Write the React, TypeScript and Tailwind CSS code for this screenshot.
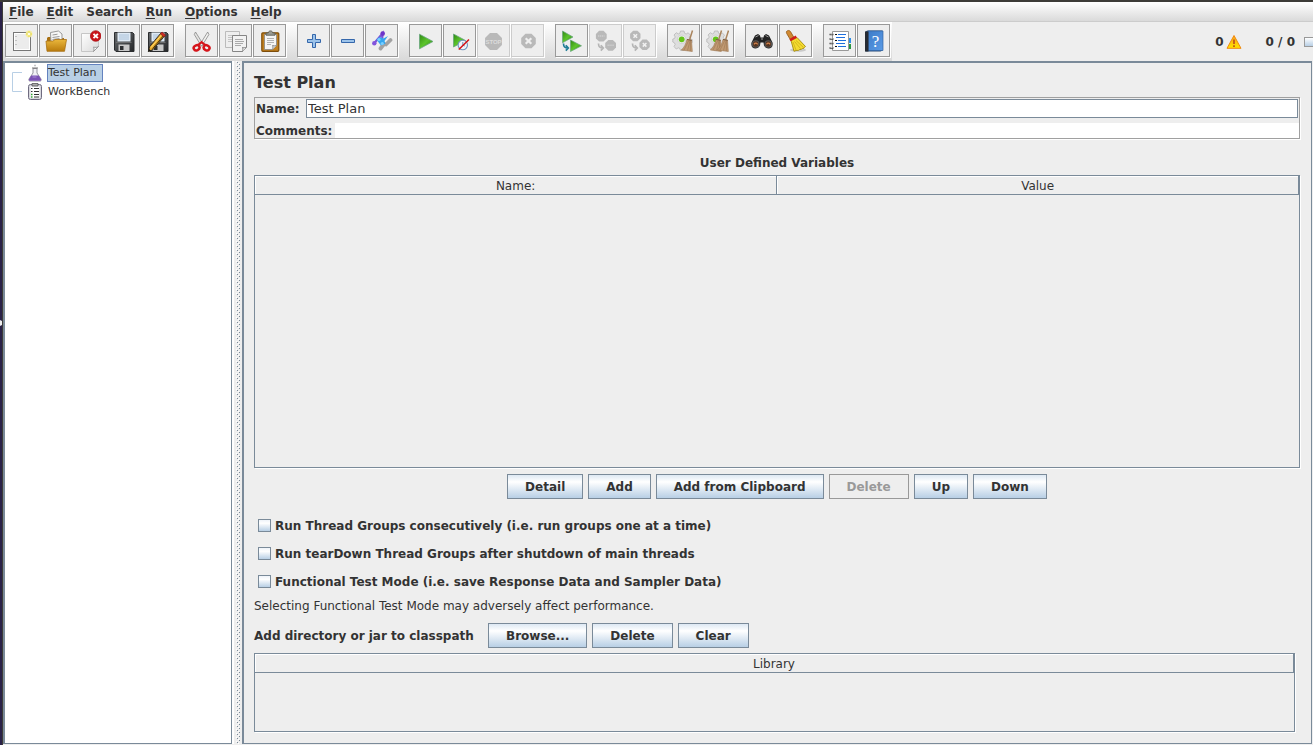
import React, { useState } from "react";

type IconProps = { children: React.ReactNode };

function Icon({ children }: IconProps) {
  return (
    <svg viewBox="0 0 23 23" className="h-[23px] w-[23px]" fill="none" aria-hidden="true">
      {children}
    </svg>
  );
}

function Defs() {
  return (
    <svg className="absolute h-0 w-0" aria-hidden="true">
      <defs>
        <linearGradient id="paper" x1="0" y1="0" x2="1" y2="1">
          <stop offset="0" stopColor="#ffffff" />
          <stop offset="1" stopColor="#d9d9d9" />
        </linearGradient>
        <linearGradient id="folder" x1="0" y1="0" x2="0" y2="1">
          <stop offset="0" stopColor="#eab73c" />
          <stop offset="1" stopColor="#b97b0c" />
        </linearGradient>
        <linearGradient id="green" x1="0" y1="0" x2="1" y2="1">
          <stop offset="0" stopColor="#2f8a12" />
          <stop offset="0.5" stopColor="#5cc42c" />
          <stop offset="1" stopColor="#2a8510" />
        </linearGradient>
        <linearGradient id="steel" x1="0" y1="0" x2="1" y2="1">
          <stop offset="0" stopColor="#6a6d70" />
          <stop offset="1" stopColor="#26282a" />
        </linearGradient>
        <linearGradient id="book" x1="0" y1="0" x2="1" y2="1">
          <stop offset="0" stopColor="#3d7cc9" />
          <stop offset="1" stopColor="#5b9be6" />
        </linearGradient>
        <linearGradient id="warn" x1="0" y1="0" x2="0" y2="1">
          <stop offset="0" stopColor="#f9a11b" />
          <stop offset="1" stopColor="#ffe600" />
        </linearGradient>
      </defs>
    </svg>
  );
}

const NewIcon = () => (
  <Icon>
    <rect x="3.5" y="3.5" width="17" height="18" fill="#ececec" stroke="#777" />
    <rect x="4.5" y="4.5" width="15" height="16" stroke="#fff" />
    <path d="M6 7v1M6 11v1M6 15v1" stroke="#999" />
    <circle cx="19" cy="5" r="3.4" fill="#f5ec9a" fillOpacity=".9" />
    <path d="M19 2v6M16 5h6" stroke="#eadb3a" />
    <circle cx="19" cy="5" r="1.3" fill="#fffde0" />
  </Icon>
);

const OpenIcon = () => (
  <Icon>
    <path d="M3 9l1-1h4l1 1h11v9H3z" fill="#a87013" />
    <path d="M6.500 3.500l8-1.500 3.500 3v10h-11z" fill="#f7f7f7" stroke="#999" />
    <path d="M8.500 6l5-.8M8.500 8.500l7-1M8.500 10.500l7-1" stroke="#999" />
    <path d="M2 12h7l2-1.500h11.500l-2 11.800H3z" fill="url(#folder)" stroke="#a87013" strokeWidth=".8" />
  </Icon>
);

const CloseIcon = () => (
  <Icon>
    <path d="M3.500 4.500h17v13l-5 5h-12z" fill="url(#paper)" stroke="#c6c6c6" />
    <path d="M15.500 22.500c.8-2 .6-3.500 0-4.500 1.800.7 3.500.5 5-.5z" fill="#fff" stroke="#888" strokeWidth=".8" />
    <circle cx="17.700" cy="7" r="5.300" fill="#c9141a" stroke="#a40b10" strokeWidth=".7" />
    <path d="M15.500 4.800l4.400 4.400M19.900 4.800l-4.400 4.400" stroke="#fff" strokeWidth="1.900" />
  </Icon>
);

const Floppy = () => (
  <>
    <path d="M2.500 3.500h18l1.500 1.500v17.500h-18l-1.500-1.500z" fill="url(#steel)" stroke="#2b2d2f" />
    <path d="M5.500 3.500h13v9h-13z" fill="#dfeaf5" />
    <path d="M7 6h10M7 8h10M7 10h10" stroke="#9db7d1" strokeWidth=".8" />
    <path d="M6.500 15.500h11v6.500h-11z" fill="#c8c8c8" />
    <path d="M8 17h3.500v4H8z" fill="#2c2e30" />
    <path d="M4 13.500h15.500" stroke="#777" strokeWidth=".8" />
  </>
);

const SaveIcon = () => (
  <Icon>
    <Floppy />
  </Icon>
);

const SaveAsIcon = () => (
  <Icon>
    <Floppy />
    <path d="M2.300 22.700l1.300-5L14.800 4.200l3.600 3L7.200 20.500z" fill="#e6a72a" stroke="#222" strokeWidth=".9" />
    <path d="M5 18.600L16 5.300" stroke="#ffdf72" strokeWidth="1" />
    <path d="M6.600 19.800L17.600 6.500" stroke="#4a3408" strokeWidth="1" />
    <path d="M14.300 4.800l1.700-1.800 3.600 3-1.700 2z" fill="#cf2a22" stroke="#731510" strokeWidth=".6" />
    <path d="M2.200 22.800l.8-2.800 1.900 1.600z" fill="#111" />
  </Icon>
);

const CutIcon = () => (
  <Icon>
    <path d="M5.500 3l7.800 12.500-2 1.500L4.300 5.500z" fill="#e4e4e2" stroke="#868686" strokeWidth=".8" />
    <path d="M17.700 3L9.900 15.500l2 1.500L18.900 5.500z" fill="#f2f2f0" stroke="#868686" strokeWidth=".8" />
    <ellipse cx="6.600" cy="18.800" rx="3" ry="2.500" stroke="#d5151b" strokeWidth="2.500" transform="rotate(-25 6.600 18.800)" />
    <ellipse cx="16.600" cy="18.800" rx="3" ry="2.500" stroke="#d5151b" strokeWidth="2.500" transform="rotate(25 16.600 18.800)" />
    <path d="M8 16l3.600-2.800L15.200 16" stroke="#d5151b" strokeWidth="2.200" />
  </Icon>
);

const CopyIcon = () => (
  <Icon>
    <path d="M1.500 2.500h14v16h-14z" fill="#eee" stroke="#bbb" />
    <path d="M4 6.500h9M4 8.500h9M4 10.500h9M4 12.500h9" stroke="#c4c4c4" />
    <path d="M8.500 6.500h14v12l-4 4h-10z" fill="#f2f2f2" stroke="#858585" />
    <path d="M11 10.500h8M11 12.500h9M11 14.500h8M11 16.500h6" stroke="#aaa" />
    <path d="M18.500 22.500c.5-1.500.5-3 0-4 1.500.5 3 .3 4-.5" fill="#fff" stroke="#777" />
  </Icon>
);

const PasteIcon = () => (
  <Icon>
    <rect x="3.800" y="3.800" width="17" height="18.500" rx="1" fill="#c1801f" stroke="#7d4d0b" strokeWidth="1.200" />
    <path d="M6.500 5.500h12v11l-4 4h-8z" fill="#f5f5f5" stroke="#888" strokeWidth=".8" />
    <path d="M9 9.500h7M9 11.500h7M9 13.500h7M9 15.500h4" stroke="#aaa" strokeWidth=".9" />
    <path d="M14.500 20.500c.5-1.500.4-3 0-4 1.500.4 2.800.4 4 0" fill="#ddd" stroke="#777" strokeWidth=".8" />
    <path d="M8 6.200V4h2.300c0-2.800 4.400-2.800 4.400 0H17v2.200z" fill="#9a9b93" stroke="#5c5d57" strokeWidth=".9" />
  </Icon>
);

const PlusIcon = () => (
  <Icon>
    <path d="M10.500 5.500h3v5h5v3h-5v5h-3v-5h-5v-3h5z" fill="#9cc3ea" stroke="#3567ab" />
  </Icon>
);

const MinusIcon = () => (
  <Icon>
    <path d="M5.500 10.500h13v3h-13z" fill="#9cc3ea" stroke="#3567ab" />
  </Icon>
);

const ToggleIcon = () => (
  <Icon>
    <path d="M10.500 19.500l3.500-4.500 2 .5 4.500-4.500" stroke="#a2a2a2" strokeWidth="3.800" strokeLinecap="round" />
    <path d="M4 14.500L12.500 4.500l-.5 9.500" stroke="#7a55d8" strokeWidth="2.200" />
    <circle cx="12.700" cy="4.600" r="2.300" fill="#6d35c9" />
    <circle cx="4.300" cy="14.300" r="2.200" fill="#8254dc" />
    <path d="M6.500 10.500l3-2.500 4 1.500 4.500-2.500-3.500 5 1 2.500-4.500 2-2-2.500z" fill="#35a6ef" />
    <circle cx="9" cy="10.500" r="1.600" fill="#79cfff" />
    <circle cx="12.300" cy="14.500" r="1.600" fill="#79cfff" />
  </Icon>
);

const PlayIcon = () => (
  <Icon>
    <path d="M5.500 5.200L19 12.500 5.500 19.800z" fill="url(#green)" stroke="#69a57f" strokeWidth=".8" />
  </Icon>
);

const PlayNoPauseIcon = () => (
  <Icon>
    <path d="M5.500 5L17.500 11.500 5.500 18z" fill="url(#green)" stroke="#69a57f" strokeWidth=".8" />
    <circle cx="14.800" cy="16" r="4.700" fill="#eef4fb" stroke="#6f94bf" strokeWidth="1.100" />
    <path d="M14.800 13v3l2 1" stroke="#6f94bf" />
    <path d="M21 10.500L10.800 20.500" stroke="#d50f14" strokeWidth="1.500" />
  </Icon>
);

const OCTAGON = "M-2.700-6.500h5.400l3.800 3.800v5.400l-3.800 3.800h-5.400l-3.800-3.800v-5.400z";

const StopIcon = () => (
  <Icon>
    <path d={OCTAGON} transform="translate(11.500 12.500) scale(1.300)" fill="#b9b9b9" />
    <text x="11.500" y="15" fontSize="6" textAnchor="middle" fill="#dcdcdc" className="font-['Liberation_Sans'] font-bold">
      STOP
    </text>
  </Icon>
);

const ShutdownIcon = () => (
  <Icon>
    <path d={OCTAGON} transform="translate(12.500 12) scale(1.120)" fill="#b9b9b9" />
    <path d="M9.700 9.200l5.600 5.600M15.300 9.200l-5.600 5.600" stroke="#efefef" strokeWidth="2.200" />
  </Icon>
);

const RemoteArrow = ({ color }: { color: string }) => (
  <path d="M4.500 14.500c0 3 .8 4.500 4.500 4.500M6.800 16.200L9.300 19l-2.500 2.700" stroke={color} strokeWidth="1.700" />
);

const RemoteStartIcon = () => (
  <Icon>
    <path d="M2.500 2L13 8 2.500 13.800z" fill="url(#green)" stroke="#69a57f" strokeWidth=".7" />
    <path d="M10.500 11L21.500 16.800 10.500 22.500z" fill="url(#green)" stroke="#69a57f" strokeWidth=".7" />
    <g transform="translate(-1 0)">
      <RemoteArrow color="#1e7d96" />
    </g>
  </Icon>
);

const RemoteStopIcon = () => (
  <Icon>
    <path d={OCTAGON} transform="translate(7.300 7.200) scale(.83)" fill="#b9b9b9" />
    <path d={OCTAGON} transform="translate(16.600 16.300) scale(.83)" fill="#b9b9b9" />
    <path d="M4 7h6.500M13.500 16.200H20" stroke="#cecece" strokeWidth="1.600" strokeDasharray="1.300 .6" />
    <RemoteArrow color="#b5b5b5" />
  </Icon>
);

const RemoteShutdownIcon = () => (
  <Icon>
    <path d={OCTAGON} transform="translate(7.300 7) scale(.8)" fill="#b9b9b9" />
    <path d={OCTAGON} transform="translate(16.600 15.800) scale(.8)" fill="#b9b9b9" />
    <path d="M5.500 5.200l3.600 3.600M9.100 5.200L5.500 8.800M14.800 14l3.600 3.600M18.400 14l-3.600 3.600" stroke="#f2f2f2" strokeWidth="1.500" />
    <RemoteArrow color="#b5b5b5" />
  </Icon>
);

const Gear = () => (
  <>
    <path
      d="M8.500 2h3.500l.6 2.300 1.600.7 2-1.200 2.300 2.400-1.200 2 .7 1.600 2.200.7v3l-2.200.7-.7 1.600 1.200 2-2.300 2.200-2-1.200-1.600.7-.6 2H8.500l-.6-2-1.600-.7-2 1.200L2 17.500l1.200-2-.7-1.600L.8 13v-3l1.700-.5.7-1.600L2 6l2.300-2.300 2 1.200 1.600-.7z"
      fill="#dedede"
      stroke="#b8b8b8"
      strokeWidth=".8"
    />
    <circle cx="9.700" cy="10.300" r="4.200" fill="#ededed" stroke="#c4c4c4" strokeWidth=".6" />
    <circle cx="9.700" cy="10.300" r="2.900" fill="#63c419" />
  </>
);

const Whisk = ({ x }: { x: number }) => (
  <g transform={`translate(${x} 0)`}>
    <path d="M20.500 1.500l-2.800 9" stroke="#a9835c" strokeWidth="1.500" />
    <path d="M15 10.500l4.500.5.8 11.500-11-1.500c3-2.500 4.500-6 5.700-10.500z" fill="#c19a72" stroke="#9c7650" strokeWidth=".6" />
    <path d="M16.500 12l-4.500 9M18 12l-2.500 9.500M18.600 12l-.3 10" stroke="#94704c" strokeWidth=".5" />
    <path d="M15 10.500l4.600.9" stroke="#7d5d3f" strokeWidth="1" />
  </g>
);

const ClearIcon = () => (
  <Icon>
    <Gear />
    <Whisk x={0} />
  </Icon>
);

const ClearAllIcon = () => (
  <Icon>
    <Gear />
    <Whisk x={-5} />
    <Whisk x={2} />
  </Icon>
);

const SearchIcon = () => (
  <Icon>
    <path d="M5 6.500l3-1.500 2 1.500.5 2h3l.5-2L16 5l3 1.500 3.500 7c1.500 7-6.500 7.500-8.500 3l-.5-3h-3l-.5 3c-2 4.500-10 4-8.500-3z" fill="#222" />
    <circle cx="5.700" cy="15" r="3.300" fill="#57341f" stroke="#555" strokeWidth="1.100" />
    <circle cx="18.300" cy="15" r="3.300" fill="#57341f" stroke="#555" strokeWidth="1.100" />
    <path d="M4 15.300c1-1.500 2.500-1.500 3.600 0M16.500 15.300c1-1.500 2.500-1.500 3.600 0" stroke="#d0834e" strokeWidth="1.200" />
    <path d="M5.500 8l3-1.500M15.500 6.500l3 1.500M11 10h2" stroke="#999" />
  </Icon>
);

const ResetSearchIcon = () => (
  <Icon>
    <ellipse cx="14" cy="21" rx="8" ry="1.700" fill="#c9c9c9" />
    <path d="M2.500 2.500c1.700-1.800 3.500-1 4.300.6l2.800 4.800-3.500 2.300-3-5c-.6-1-.9-1.900-.6-2.700z" fill="#d18a32" stroke="#8f5514" strokeWidth=".8" />
    <path d="M7 11.500l6-3 8.500 9c-1 .3-1.500 1-1.800 2-1.300-.2-2.100.2-2.600 1-1.300-.2-2.200.2-2.800 1-1.500-.2-2.700 0-4.300.8z" fill="#f4db31" stroke="#a58a0c" strokeWidth=".9" />
    <path d="M9 13l3 8M10.500 12.500l6 7M12 11.500l7.500 7" stroke="#c5a714" strokeWidth=".7" />
    <path d="M6 11.200l6.300-3.600" stroke="#d31b1b" strokeWidth="2.400" />
  </Icon>
);

const FunctionIcon = () => (
  <Icon>
    <path d="M20 9h3v5h-3z" fill="#2e8fe8" />
    <path d="M20 15h3v5h-3z" fill="#2a9640" />
    <path d="M4.500 2.500h16v19h-16z" fill="#fff" stroke="#999" />
    <path d="M7 5.500h2M7 11.500h2M7 17.500h2" stroke="#111" />
    <path d="M10 5.500h8M8 8.500h9M10 11.500h8M8 14.500h9M10 17.500h8" stroke="#1f6fdc" />
    <path d="M1.500 5.500h4M1.500 10h4M1.500 14.500h4M1.500 19h4" stroke="#444" strokeWidth="1.600" />
    <path d="M2.500 5h2M2.500 9.500h2M2.500 14h2M2.500 18.500h2" stroke="#ddd" strokeWidth=".8" />
  </Icon>
);

const HelpIcon = () => (
  <Icon>
    <path d="M3.500 2.500l2-1h15v20l-2 1h-15z" fill="#2b4c78" />
    <path d="M6 2h15v19.500H6z" fill="url(#book)" stroke="#3566a3" strokeWidth=".7" />
    <path d="M3 2.500h3.500v20H3z" fill="#262b33" />
    <text x="13.500" y="17.500" fontSize="17" textAnchor="middle" fill="#fff" className="font-['Liberation_Serif']">
      ?
    </text>
  </Icon>
);

type Tool = { label: string; icon: React.ReactNode; disabled?: boolean };

const toolGroups: Tool[][] = [
  [
    { label: "New", icon: <NewIcon /> },
    { label: "Open", icon: <OpenIcon /> },
    { label: "Close", icon: <CloseIcon /> },
    { label: "Save", icon: <SaveIcon /> },
    { label: "Save as", icon: <SaveAsIcon /> },
  ],
  [
    { label: "Cut", icon: <CutIcon /> },
    { label: "Copy", icon: <CopyIcon /> },
    { label: "Paste", icon: <PasteIcon /> },
  ],
  [
    { label: "Expand all", icon: <PlusIcon /> },
    { label: "Collapse all", icon: <MinusIcon /> },
    { label: "Toggle", icon: <ToggleIcon /> },
  ],
  [
    { label: "Start", icon: <PlayIcon /> },
    { label: "Start no pauses", icon: <PlayNoPauseIcon /> },
    { label: "Stop", icon: <StopIcon />, disabled: true },
    { label: "Shutdown", icon: <ShutdownIcon />, disabled: true },
  ],
  [
    { label: "Remote start all", icon: <RemoteStartIcon /> },
    { label: "Remote stop all", icon: <RemoteStopIcon />, disabled: true },
    { label: "Remote shutdown all", icon: <RemoteShutdownIcon />, disabled: true },
  ],
  [
    { label: "Clear", icon: <ClearIcon /> },
    { label: "Clear all", icon: <ClearAllIcon /> },
  ],
  [
    { label: "Find", icon: <SearchIcon /> },
    { label: "Reset search", icon: <ResetSearchIcon /> },
  ],
  [
    { label: "Function helper", icon: <FunctionIcon /> },
    { label: "Help contents", icon: <HelpIcon /> },
  ],
];

function MenuBar() {
  const menus: [string, string, string][] = [
    ["", "F", "ile"],
    ["", "E", "dit"],
    ["Search", "", ""],
    ["", "R", "un"],
    ["", "O", "ptions"],
    ["", "H", "elp"],
  ];
  return (
    <nav className="flex h-5 shrink-0 items-center gap-[13px] border-b border-[#cccccc] bg-linear-to-b from-white to-[#dadada] pl-[6px] font-bold">
      {menus.map(([before, key, after]) => (
        <button key={before + key} type="button" className="leading-4">
          {before}
          {key && <u className="underline-offset-2">{key}</u>}
          {after}
        </button>
      ))}
    </nav>
  );
}

function ToolBar() {
  return (
    <div className="flex h-[39px] shrink-0 items-center overflow-hidden">
      <div className="flex h-full items-start gap-[11px] border-b-2 border-[#dadada] bg-linear-to-b from-white to-[#dadada] pt-[2px] pr-[2px] pl-[2px]">
        {toolGroups.map((group) => (
          <div key={group[0].label} className="flex gap-px">
            {group.map((tool) => (
              <button
                key={tool.label}
                type="button"
                aria-label={tool.label}
                disabled={tool.disabled}
                className="flex h-[33px] w-[33px] items-center justify-center border border-[#999999] bg-[#eeeeee] shadow-[1px_1px_0_#ffffff] disabled:border-[#cccccc]"
              >
                {tool.icon}
              </button>
            ))}
          </div>
        ))}
      </div>
      <div className="ml-auto flex items-center font-bold">
        <span>0</span>
        <svg viewBox="0 0 16 16" className="ml-[2px] h-4 w-4" fill="none" aria-hidden="true">
          <path d="M8 1.500L15 14.300H1z" fill="url(#warn)" stroke="#f08a12" strokeLinejoin="round" />
          <path d="M8 5.500v4.500M8 11.200v1.800" stroke="#c4571a" strokeWidth="1.800" />
        </svg>
        <span className="ml-6">0 / 0</span>
        <span className="ml-[9px] h-[10px] w-[9px] border border-r-0 border-[#999999] bg-linear-to-b from-white to-[#b8cfe5]" />
      </div>
    </div>
  );
}

function FlaskIcon() {
  return (
    <svg viewBox="0 0 16 19" className="h-[19px] w-4" fill="none" aria-hidden="true">
      <path d="M6 5.500h4v4.500l4 6c.5 1.500 0 2-1 2H3c-1 0-1.500-.5-1-2l4-6z" fill="#f1f1f5" stroke="#8b8b96" strokeWidth=".9" />
      <path d="M4.300 12.500h7.400l2.300 3.700c.3 1.300-.3 1.600-1 1.600H3c-.7 0-1.300-.3-1-1.600z" fill="#7b52b5" />
      <path d="M5 5h6" stroke="#777" />
      <path d="M8 3.500V1.500M7 2.500h2" stroke="#c4c4c8" />
      <path d="M5.500 14h4" stroke="#a98cd6" />
    </svg>
  );
}

function ClipboardIcon() {
  return (
    <svg viewBox="0 0 16 19" className="h-[19px] w-4" fill="none" aria-hidden="true">
      <rect x="1.500" y="2.500" width="13" height="15" rx="2" fill="#d8d8de" stroke="#6f6b80" />
      <path d="M3.500 4.500h9v11.500h-9z" fill="#fff" />
      <path d="M5 1.500h6v2.500H5z" fill="#aaa" stroke="#555" strokeWidth=".8" />
      <path d="M7 6.500h5M7 9.500h5M7 12.500h5M7 15h5" stroke="#333" strokeWidth="1.200" />
      <path d="M4 6.500h1.500M4 9.500h1.500" stroke="#333" strokeWidth="1.200" />
      <path d="M4 12.500h1.500M4 15h1.500" stroke="#34a534" strokeWidth="1.400" />
    </svg>
  );
}

function TreePane() {
  return (
    <aside className="flex w-[229px] shrink-0 items-start border-2 border-r border-b border-[#7a8a99] bg-white pl-[7px] text-[11px]">
      <svg viewBox="0 0 10 38" className="h-[38px] w-[10px]" fill="none" aria-hidden="true">
        <path d="M10 9.500H.5v19H10" stroke="#b8cfe5" />
      </svg>
      <ul className="pl-[5px]">
        <li className="flex h-[19px] items-center">
          <FlaskIcon />
          <button type="button" className="ml-1 border border-[#6382bf] bg-[#b8cfe5] pr-[5px] leading-4">
            Test Plan
          </button>
        </li>
        <li className="flex h-[19px] items-center">
          <ClipboardIcon />
          <button type="button" className="ml-[5px] leading-4">
            WorkBench
          </button>
        </li>
      </ul>
    </aside>
  );
}

function Divider() {
  return (
    <div className="flex w-[10px] shrink-0 border-l-2 border-white pl-[2px]">
      <svg className="h-full w-[5px]" aria-hidden="true">
        <defs>
          <pattern id="bumps" width="5" height="4" patternUnits="userSpaceOnUse">
            <rect x="0" y="0" width="1" height="1" fill="#fff" />
            <rect x="1" y="1" width="1" height="1" fill="#7a8a99" />
            <rect x="2" y="2" width="1" height="1" fill="#fff" />
            <rect x="3" y="3" width="1" height="1" fill="#7a8a99" />
          </pattern>
        </defs>
        <rect width="5" height="100%" fill="url(#bumps)" />
      </svg>
    </div>
  );
}

function SwingButton({ children, disabled }: { children: React.ReactNode; disabled?: boolean }) {
  return (
    <button
      type="button"
      disabled={disabled}
      className="h-[25px] border border-[#7a8a99] bg-linear-to-b from-[#dde8f3] via-white via-30% to-[#b8cfe5] px-[17px] font-bold whitespace-nowrap disabled:border-[#999999] disabled:bg-none disabled:text-[#999999]"
    >
      {children}
    </button>
  );
}

function DataTable({ columns }: { columns: string[] }) {
  return (
    <table className="w-full table-fixed border-collapse">
      <thead>
        <tr>
          {columns.map((column) => (
            <th
              key={column}
              className="h-[18px] border-r border-b border-[#7a8a99] px-0 pt-[2px] pb-0 leading-4 font-normal shadow-[inset_1px_1px_0_#ffffff]"
            >
              {column}
            </th>
          ))}
        </tr>
      </thead>
      <tbody />
    </table>
  );
}

function CheckRow({ label }: { label: string }) {
  const [checked, setChecked] = useState(false);
  return (
    <label className="flex h-7 items-center gap-1 pl-1 font-bold">
      <input
        type="checkbox"
        checked={checked}
        onChange={(event) => setChecked(event.target.checked)}
        className="mb-px h-[13px] w-[13px] appearance-none border border-[#7a8a99] bg-linear-to-b from-[#eef3f9] via-white via-30% to-[#b8cfe5] checked:bg-[#6382bf]"
      />
      {label}
    </label>
  );
}

function TestPlanPane() {
  const [name, setName] = useState("Test Plan");
  const [comments, setComments] = useState("");
  return (
    <main className="flex min-w-0 flex-1 flex-col border-2 border-r border-b border-[#7a8a99] pt-[9px] pr-[11px] pb-[11px] pl-[10px]">
      <h1 className="text-base leading-[22px] font-bold">Test Plan</h1>
      <div className="mt-[3px] border border-[#a0a0a0] pt-px shadow-[1px_1px_0_#ffffff]">
        <div className="flex h-[19px] items-center pr-px pl-px">
          <label htmlFor="plan-name" className="w-[50px] font-bold">
            Name:
          </label>
          <input
            id="plan-name"
            value={name}
            onChange={(event) => setName(event.target.value)}
            className="h-full min-w-0 flex-1 border border-[#7a8a99] bg-white px-px text-[13px] outline-none"
          />
        </div>
        <div className="mt-[5px] flex h-[15px] items-center pl-px">
          <label htmlFor="plan-comments" className="w-[79px] font-bold">
            Comments:
          </label>
          <input
            id="plan-comments"
            value={comments}
            onChange={(event) => setComments(event.target.value)}
            className="h-full min-w-0 flex-1 bg-white px-px text-[13px] outline-none"
          />
        </div>
      </div>

      <h2 className="mt-[15px] mb-[3px] text-center leading-[18px] font-bold">User Defined Variables</h2>
      <div className="min-h-24 flex-1 border border-[#7a8a99] shadow-[1px_1px_0_#ffffff]">
        <DataTable columns={["Name:", "Value"]} />
      </div>
      <div className="mt-[6px] flex justify-center gap-[5px]">
        <SwingButton>Detail</SwingButton>
        <SwingButton>Add</SwingButton>
        <SwingButton>Add from Clipboard</SwingButton>
        <SwingButton disabled>Delete</SwingButton>
        <SwingButton>Up</SwingButton>
        <SwingButton>Down</SwingButton>
      </div>

      <div className="mt-[13px]">
        <CheckRow label="Run Thread Groups consecutively (i.e. run groups one at a time)" />
        <CheckRow label="Run tearDown Thread Groups after shutdown of main threads" />
        <CheckRow label="Functional Test Mode (i.e. save Response Data and Sampler Data)" />
      </div>
      <p className="leading-5">Selecting Functional Test Mode may adversely affect performance.</p>

      <div className="mt-[7px] flex items-center gap-[5px]">
        <span className="w-[229px] font-bold">Add directory or jar to classpath</span>
        <SwingButton>Browse...</SwingButton>
        <SwingButton>Delete</SwingButton>
        <SwingButton>Clear</SwingButton>
      </div>
      <div className="mt-[5px] mr-[5px] h-[79px] shrink-0 border border-[#7a8a99] shadow-[1px_1px_0_#ffffff]">
        <DataTable columns={["Library"]} />
      </div>
    </main>
  );
}

export default function App() {
  return (
    <div className="flex min-h-screen flex-col border-t-2 border-[#3c3b37] bg-[#eeeeee] font-['DejaVu_Sans',sans-serif] text-[12px] text-[#333333]">
      <Defs />
      <div className="flex flex-1">
        <div className="flex w-[3px] shrink-0 flex-col justify-center border-r border-[#3c3b37] bg-[#2a2148]">
          <svg viewBox="0 0 2 6" className="mb-[102px] h-[6px] w-[2px]" aria-hidden="true">
            <path d="M0 0l2 1v4l-2 1z" fill="#eee" />
          </svg>
        </div>
        <div className="flex min-w-0 flex-1 flex-col">
          <MenuBar />
          <ToolBar />
          <div className="flex flex-1 pr-px pb-px">
            <TreePane />
            <Divider />
            <TestPlanPane />
          </div>
        </div>
      </div>
    </div>
  );
}
